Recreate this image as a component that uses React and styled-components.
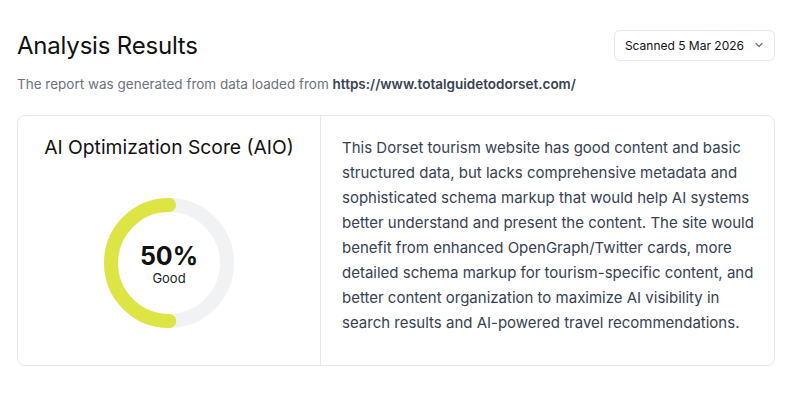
import React from "react";
import styled, { createGlobalStyle } from "styled-components";

const GlobalStyle = createGlobalStyle`
  * { box-sizing: border-box; }
  body {
    margin: 0;
    background: #fff;
    font-family: Inter, "Liberation Sans", sans-serif;
    color: #111827;
  }
`;

const Page = styled.div`
  padding: 28px 25px 0 17px;
`;

const Header = styled.div`
  display: flex;
  align-items: center;
  justify-content: space-between;
  height: 34px;
`;

const Title = styled.h1`
  margin: 0;
  font-size: 24px;
  font-weight: 400;
  letter-spacing: -0.2px;
  color: #111;
`;

const Select = styled.button`
  display: flex;
  align-items: center;
  gap: 10px;
  height: 31px;
  padding: 0 10px 0 10px;
  border: 1px solid #e5e7eb;
  border-radius: 6px;
  background: #fff;
  font-family: inherit;
  font-size: 12px;
  color: #111;
`;

const Subtitle = styled.p`
  margin: 14px 0 0;
  font-size: 13.5px;
  color: #6b7280;

  > b {
    color: #374151;
    font-weight: 600;
  }
`;

const Card = styled.div`
  display: flex;
  margin-top: 23px;
  height: 251px;
  border: 1px solid #e5e7eb;
  border-radius: 8px;
`;

const ScorePanel = styled.div`
  width: 303px;
  flex-shrink: 0;
  display: flex;
  flex-direction: column;
  align-items: center;
  padding-top: 19px;
  border-right: 1px solid #e5e7eb;

  > h2 {
    margin: 0;
    font-size: 19.3px;
    font-weight: 400;
    color: #111;
  }
`;

const Gauge = styled.div`
  position: relative;
  width: 130px;
  height: 130px;
  margin-top: 39px;

  > svg {
    display: block;
  }
`;

const GaugeLabel = styled.div`
  position: absolute;
  inset: 0;
  display: flex;
  flex-direction: column;
  align-items: center;
  justify-content: center;
  padding-top: 2px;

  > strong {
    font-size: 25px;
    font-weight: 700;
    line-height: 28px;
    color: #111;
  }
  > span {
    font-size: 13px;
    color: #222;
  }
`;

const Summary = styled.p`
  margin: 0;
  padding: 19px 16px 0 21px;
  font-size: 15px;
  line-height: 25px;
  color: #374151;
`;

const ScoreRing = ({ value }) => {
  const r = 58;
  const c = 2 * Math.PI * r;
  return (
    <svg width="130" height="130" viewBox="0 0 130 130">
      <circle cx="65" cy="65" r={r} fill="none" stroke="#f1f2f4" strokeWidth="14" />
      <circle
        cx="65"
        cy="65"
        r={r}
        fill="none"
        stroke="#dde545"
        strokeWidth="14"
        strokeLinecap="round"
        strokeDasharray={`${(c * value) / 100} ${c}`}
        transform="rotate(-90 65 65) scale(1 -1) translate(0 -130)"
      />
    </svg>
  );
};

const App = () => (
  <>
    <GlobalStyle />
    <Page>
      <Header>
        <Title>Analysis Results</Title>
        <Select>
          Scanned 5 Mar 2026
          <svg width="10" height="10" viewBox="0 0 10 10">
            <path d="M2 3.5l3 3 3-3" fill="none" stroke="#6b7280" strokeWidth="1.2" strokeLinecap="round" strokeLinejoin="round" />
          </svg>
        </Select>
      </Header>
      <Subtitle>
        The report was generated from data loaded from <b>https://www.totalguidetodorset.com/</b>
      </Subtitle>
      <Card>
        <ScorePanel>
          <h2>AI Optimization Score (AIO)</h2>
          <Gauge>
            <ScoreRing value={50} />
            <GaugeLabel>
              <strong>50%</strong>
              <span>Good</span>
            </GaugeLabel>
          </Gauge>
        </ScorePanel>
        <Summary>
          This Dorset tourism website has good content and basic structured data, but lacks
          comprehensive metadata and sophisticated schema markup that would help AI systems
          better understand and present the content. The site would benefit from enhanced
          OpenGraph/Twitter cards, more detailed schema markup for tourism-specific content, and
          better content organization to maximize AI visibility in search results and AI-powered
          travel recommendations.
        </Summary>
      </Card>
    </Page>
  </>
);

export default App;
